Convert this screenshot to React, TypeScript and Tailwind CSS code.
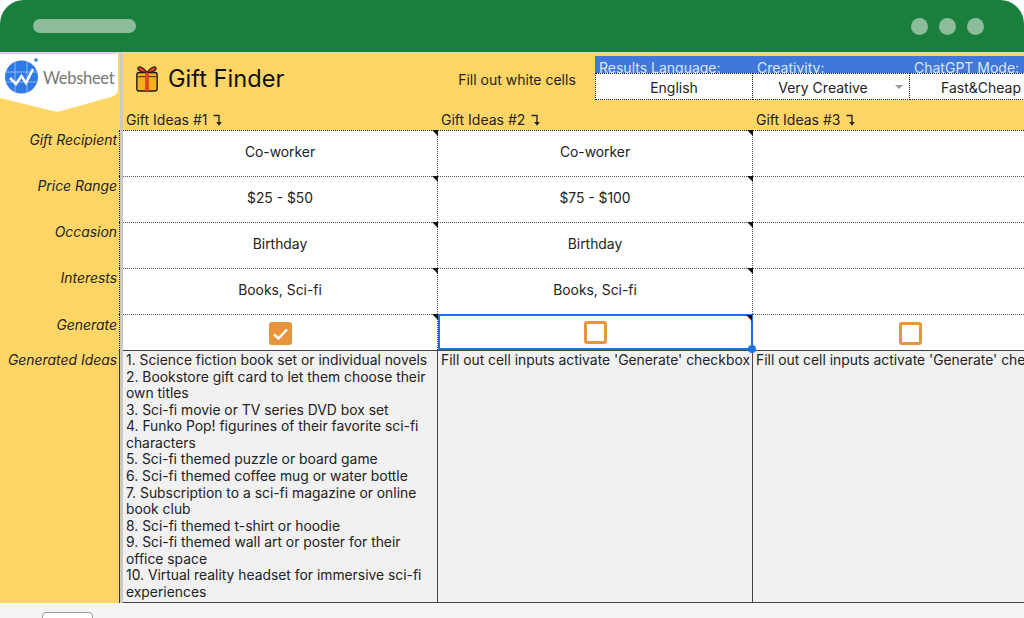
const rows = [
  { label: 'Gift Recipient', values: ['Co-worker', 'Co-worker', ''] },
  { label: 'Price Range', values: ['$25 - $50', '$75 - $100', ''] },
  { label: 'Occasion', values: ['Birthday', 'Birthday', ''] },
  { label: 'Interests', values: ['Books, Sci-fi', 'Books, Sci-fi', ''] },
];

const ideas = [
  '1. Science fiction book set or individual novels',
  '2. Bookstore gift card to let them choose their own titles',
  '3. Sci-fi movie or TV series DVD box set',
  '4. Funko Pop! figurines of their favorite sci-fi characters',
  '5. Sci-fi themed puzzle or board game',
  '6. Sci-fi themed coffee mug or water bottle',
  '7. Subscription to a sci-fi magazine or online book club',
  '8. Sci-fi themed t-shirt or hoodie',
  '9. Sci-fi themed wall art or poster for their office space',
  '10. Virtual reality headset for immersive sci-fi experiences',
];

const emptyHint = "Fill out cell inputs activate 'Generate' checkbox";

function Logo() {
  return (
    <div className="relative h-[59px] w-[118px]">
      <svg className="absolute inset-0" width="118" height="59" viewBox="0 0 118 59">
        <path d="M0 0H118V35Q118 41 111 43L61 57Q57 58 53 57L0 44Z" fill="#fff" />
        <circle cx="21.500" cy="23" r="16.500" fill="#2f7ae5" />
        <path d="M5 18H38M5 28H38M15 7V39M27 7V39" stroke="#a9c8f4" strokeWidth="0.800" />
        <path d="M10 24L16 30L21.500 22L26 29L33 15" fill="none" stroke="#fff" strokeWidth="2.500" />
        <circle cx="36" cy="6" r="1.800" fill="#2f7ae5" />
      </svg>
      <span className="absolute left-[43px] top-[12px] text-[16.500px] leading-[24px] tracking-[-0.3px] font-['Lato',sans-serif] text-[#77787a]">
        Websheet
      </span>
    </div>
  );
}

function GiftIcon() {
  return (
    <svg width="24" height="28" viewBox="0 0 26 30">
      <path d="M13 8C9 2 5 1 3.500 2.500C2 5 6 8 13 8C20 8 24 5 22.500 2.500C21 1 17 2 13 8Z" fill="#e2421f" stroke="#1f1a10" strokeWidth="1.200" />
      <rect x="2" y="8" width="22" height="20" rx="2.500" fill="#f6b01e" stroke="#1f1a10" strokeWidth="1.500" />
      <path d="M2.500 12.500H23.500" stroke="#1f1a10" strokeWidth="1" />
      <rect x="11" y="8" width="4" height="20" fill="#e2421f" />
    </svg>
  );
}

function Corner() {
  return <span className="absolute -right-px -top-px h-[6px] w-[6px] bg-[#111] [clip-path:polygon(0_0,100%_0,100%_100%)]" />;
}

function Checkbox({ checked }: { checked?: boolean }) {
  if (checked) {
    return (
      <span className="flex h-[23px] w-[23px] items-center justify-center rounded-[3px] bg-[#e8943c]">
        <svg width="17" height="14" viewBox="0 0 17 14">
          <path d="M2 7.500L6.500 11.500L15 2.500" fill="none" stroke="#fff" strokeWidth="2.400" />
        </svg>
      </span>
    );
  }
  return <span className="h-[23px] w-[23px] rounded-[3px] border-[3px] border-[#e8943c]" />;
}

function GiftHeader({ n }: { n: number }) {
  return (
    <span className="flex items-center gap-[6px] pl-[3px] text-[14px] leading-[18px] text-[#222]">
      Gift Ideas #{n}
      <svg width="10" height="12" viewBox="0 0 10 12">
        <path d="M0.500 1.500H6V10" fill="none" stroke="#222" strokeWidth="1.300" />
        <path d="M3.200 8H8.800L6 11.800Z" fill="#222" />
      </svg>
    </span>
  );
}

function Setting({ label, value, width, dropdown, first }: { label: string; value: string; width: string; dropdown?: boolean; first?: boolean }) {
  return (
    <div className={`shrink-0 ${width}`}>
      <div className="h-[17px] overflow-hidden bg-[#3f78d8] pl-1 text-[14px] leading-[23px] text-[#dbe6f8]">{label}</div>
      <div className={`relative flex h-[27px] items-center justify-center border-y border-r border-dotted border-[#111] bg-white pt-[2px] text-[14px] text-[#222] ${first ? 'border-l' : ''} ${dropdown ? 'pr-[16px]' : ''}`}>
        {value}
        {dropdown && <span className="absolute right-[6px] top-[11px] h-0 w-0 border-x-[4px] border-t-[4px] border-x-transparent border-t-[#999]" />}
      </div>
    </div>
  );
}

export default function App() {
  return (
    <div className="flex h-[618px] w-[1024px] flex-col overflow-hidden bg-white font-['Inter',sans-serif]">
      <div className="flex h-[52px] shrink-0 items-center justify-between rounded-t-[24px] bg-[#1a7f3c] pl-[33px] pr-[40px]">
        <div className="h-[14px] w-[103px] rounded-full bg-[#8cbc9b]" />
        <div className="flex gap-[11px]">
          <div className="h-[17px] w-[17px] rounded-full bg-[#8cbc9b]" />
          <div className="h-[17px] w-[17px] rounded-full bg-[#8cbc9b]" />
          <div className="h-[17px] w-[17px] rounded-full bg-[#8cbc9b]" />
        </div>
      </div>

      <div className="h-px shrink-0 bg-[#d9d9d9]" />

      <div className="flex h-[550px] shrink-0">
        <div className="flex w-[120px] shrink-0 flex-col bg-[#ffd666] text-[13.9px]">
          <div className="h-[77px] pt-px">
            <Logo />
          </div>
          {rows.map((row) => (
            <div key={row.label} className="h-[46px] border-r border-dotted border-[#111] pr-[2px] pt-[1px] text-right italic leading-[18px] text-[#222]">
              {row.label}
            </div>
          ))}
          <div className="h-[36px] border-r border-dotted border-[#111] pr-[2px] pt-[2px] text-right italic leading-[18px] text-[#222]">
            Generate
          </div>
          <div className="flex-1 border-r border-[#333] pr-[2px] pt-[1px] text-right italic leading-[18px] text-[#222]">
            Generated Ideas
          </div>
        </div>

        <div className="w-[3px] shrink-0 bg-[#c9c9c9]" />

        <div className="flex min-w-0 flex-1 flex-col overflow-hidden">
          <div className="flex h-[77px] flex-col bg-[#ffd666]">
            <div className="flex h-[48px] pt-[3px]">
              <div className="flex w-[316px] shrink-0 items-center gap-[9px] pl-[12px] pt-[1px]">
                <GiftIcon />
                <span className="text-[23.6px] text-[#111]">Gift Finder</span>
              </div>
              <div className="flex w-[156px] shrink-0 items-center justify-center pt-[2px] text-[14px] text-[#222]">
                Fill out white cells
              </div>
              <Setting label="Results Language:" value="English" width="w-[158px]" first />
              <Setting label="Creativity:" value="Very Creative" width="w-[157px]" dropdown />
              <Setting label="ChatGPT Mode:" value="Fast&Cheap" width="w-[143px]" />
            </div>
            <div className="flex flex-1 items-end pb-[1px]">
              <div className="w-[315px]"><GiftHeader n={1} /></div>
              <div className="w-[315px]"><GiftHeader n={2} /></div>
              <div><GiftHeader n={3} /></div>
            </div>
          </div>

          <div className="grid flex-1 grid-cols-[315px_315px_315px] grid-rows-[46px_46px_46px_46px_36px_1fr] text-[13.87px] text-[#222]">
            {rows.flatMap((row, r) =>
              row.values.map((value, i) => (
                <div
                  key={row.label + i}
                  className={`relative flex items-center justify-center border-t border-dotted bg-white pb-[2px] ${r === 0 ? 'border-t-[#111]' : 'border-t-[#555]'} ${i < 2 ? 'border-r border-r-[#555]' : ''}`}
                >
                  {value}
                  {i < 2 && <Corner />}
                </div>
              )),
            )}

            <div className="relative flex items-center justify-center border-t border-r border-dotted border-[#555] bg-white pt-[2px]">
              <Checkbox checked />
              <Corner />
            </div>
            <div className="relative flex items-center justify-center border-2 border-[#1a73e8] bg-white">
              <Checkbox />
              <Corner />
              <span className="absolute -bottom-[5px] -right-[5px] z-10 h-[8px] w-[8px] rounded-full bg-[#1a73e8]" />
            </div>
            <div className="flex items-center justify-center border-t border-dotted border-[#555] bg-white pt-[2px]">
              <Checkbox />
            </div>

            <div className="border-t border-r border-b border-[#444] bg-[#f1f1f1] pl-[3px] pr-1 pt-px leading-[16.57px]">
              {ideas.map((idea) => (
                <div key={idea}>{idea}</div>
              ))}
            </div>
            <div className="overflow-hidden whitespace-nowrap border-t border-r border-b border-[#444] bg-[#f1f1f1] pl-[3px] pt-px leading-[16.57px]">
              {emptyHint}
            </div>
            <div className="overflow-hidden whitespace-nowrap border-t border-b border-[#444] bg-[#f1f1f1] pl-[3px] pt-px leading-[16.57px]">
              {emptyHint}
            </div>
          </div>
        </div>
      </div>

      <div className="relative flex-1 rounded-b-[16px] bg-[#f4f5f4]">
        <div className="ml-[42px] mt-[9px] h-[20px] w-[51px] rounded-[4px] border border-[#999] bg-white" />
      </div>
    </div>
  );
}
